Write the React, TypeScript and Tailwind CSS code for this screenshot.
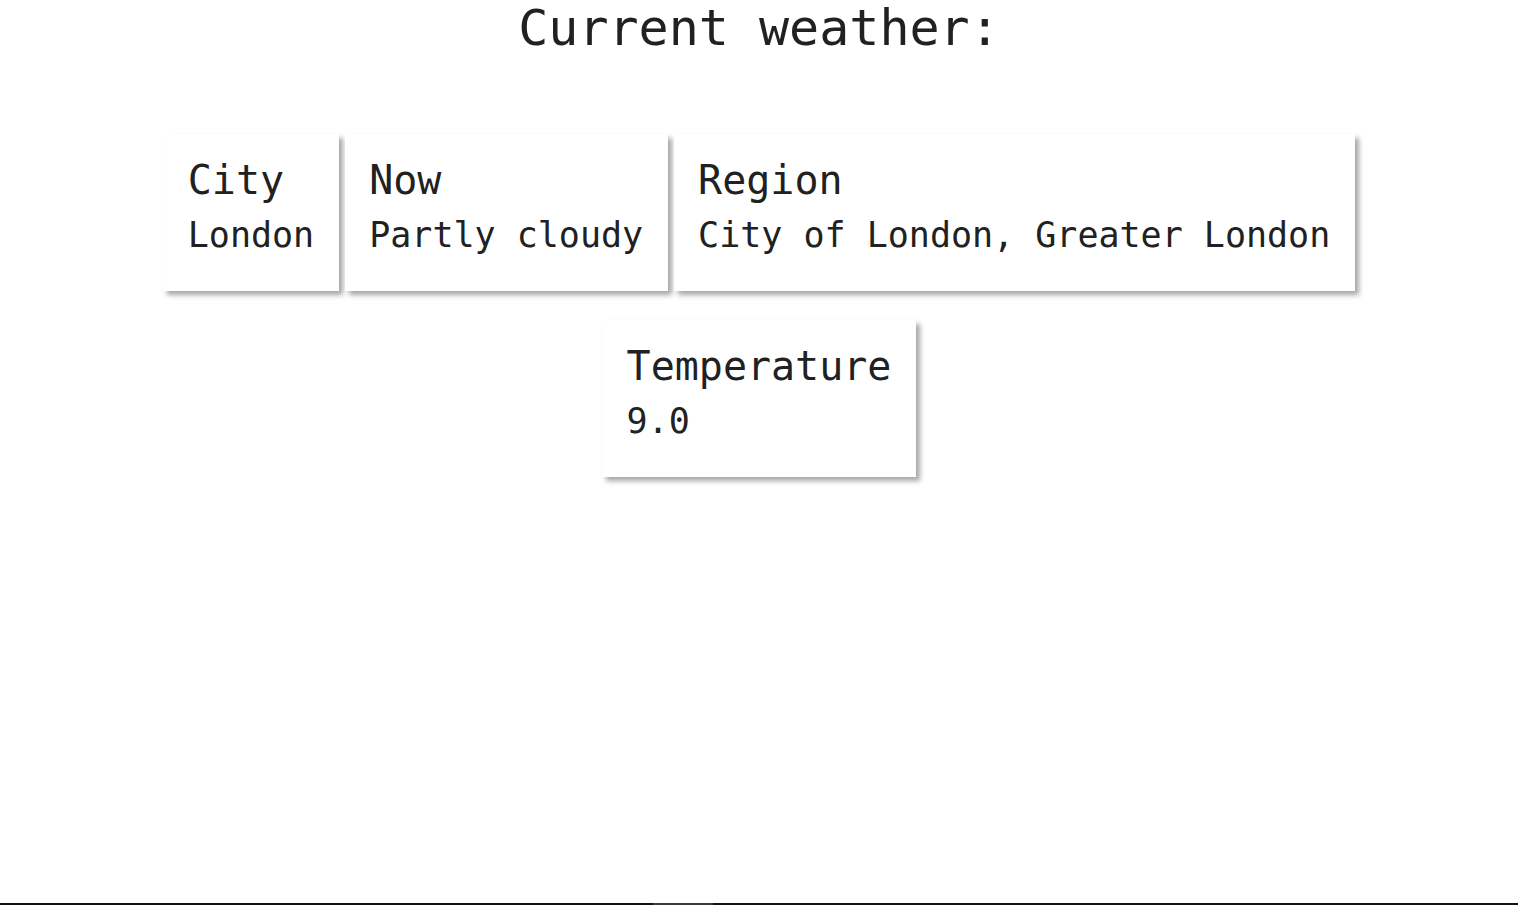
const cards = [
  { title: 'City', value: 'London' },
  { title: 'Now', value: 'Partly cloudy' },
  { title: 'Region', value: 'City of London, Greater London' },
  { title: 'Temperature', value: '9.0' },
]

function Card({ title, value }: { title: string; value: string }) {
  return (
    <div className="bg-white px-[24.5px] pt-6 pb-[36px] shadow-[4px_4px_5px_rgba(0,0,0,0.35)]">
      <div className="text-[40px] leading-[45px]">{title}</div>
      <div className="mt-3 text-[35px] leading-[40px]">{value}</div>
    </div>
  )
}

export default function App() {
  return (
    <div className="h-[905px] flex flex-col bg-white text-[#212121] font-['DejaVu_Sans_Mono',monospace]">
      <h1 className="text-center text-[50px] leading-[56px]">Current weather:</h1>

      {/* cards */}
      <div className="mt-[78px] flex flex-wrap justify-center gap-x-[6px] gap-y-[29px] px-[160px]">
        {cards.map((c) => (
          <Card key={c.title} title={c.title} value={c.value} />
        ))}
      </div>

      <div className="mt-auto h-[2px] flex">
        <div className="w-[653px] bg-[#15100f]" />
        <div className="w-[60px] bg-[#3a3a3a]" />
        <div className="flex-1 bg-[#1a1211]" />
      </div>
    </div>
  )
}
